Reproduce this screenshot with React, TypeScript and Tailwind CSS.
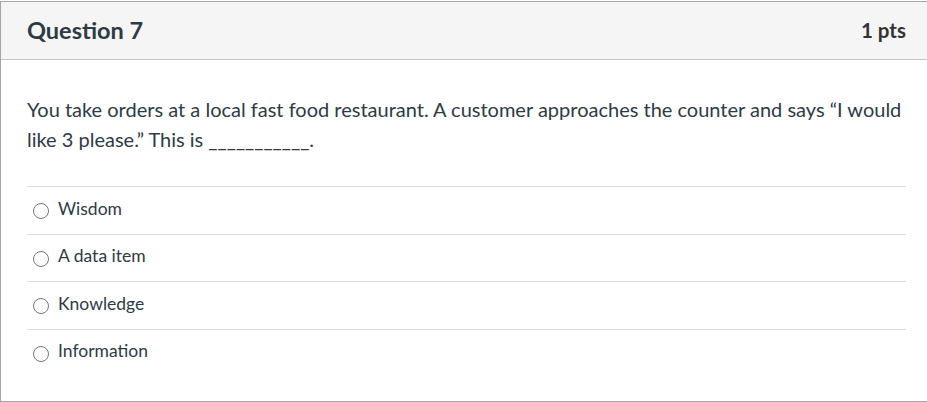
import React from "react";

const options = ["Wisdom", "A data item", "Knowledge", "Information"];

export default function App() {
  return (
    <div
      className="w-[927px] h-[402px] overflow-hidden bg-white pt-px pl-0"
      style={{ fontFamily: "Lato, 'Liberation Sans', sans-serif" }}
    >
      <div className="w-[940px] h-[401px] border border-[#a5a5a5] flex flex-col">
        <div className="h-[58px] bg-[#f5f5f5] border-b border-[#c7c7c7] flex items-center justify-between pl-[26px] pr-[33px] text-[#2d3b45]">
          <div className="text-[23.5px] font-bold">Question 7</div>
          <div className="text-[20.5px] font-bold text-[#333]">1 pts</div>
        </div>
        <div className="pl-[26px] pr-[33px] pt-[34px] text-[#2d3b45]">
          <p className="text-[20px] leading-[30px]">
            You take orders at a local fast food restaurant. A customer approaches the counter and says “I would like 3
            please.” This is ___________.
          </p>
          <div className="mt-[32px]">
            {options.map((o) => (
              <div key={o} className="border-t border-[#dcdcdc] h-[47.6px] flex items-center pl-[6px]">
                <span className="w-[16px] h-[16px] rounded-full border border-[#777] bg-white mt-[2px]" />
                <span className="ml-[9px] text-[17.5px] text-[#2d3b45] -mt-[3px]">{o}</span>
              </div>
            ))}
          </div>
        </div>
      </div>
    </div>
  );
}
